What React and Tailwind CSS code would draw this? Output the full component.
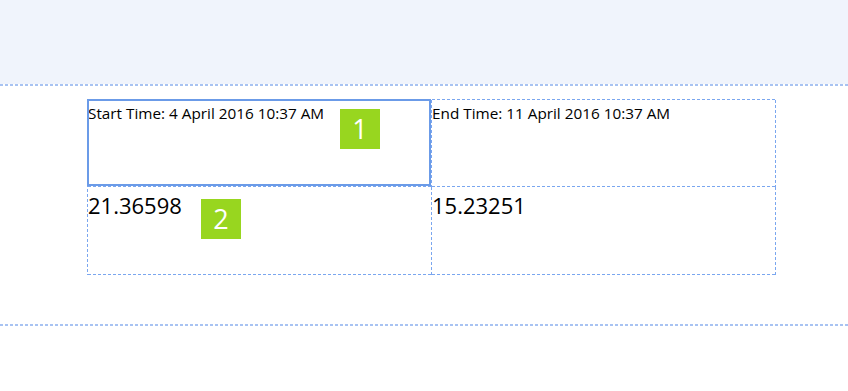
export default function App() {
  const dots = 'h-[2px] bg-[repeating-linear-gradient(to_right,#a8c3f2_0_3px,transparent_3px_5px)]'
  // dashed right + bottom edge for each table cell
  const cell =
    'bg-[repeating-linear-gradient(to_right,#7aa6ef_0_3px,transparent_3px_5px),repeating-linear-gradient(to_bottom,#7aa6ef_0_3px,transparent_3px_5px)] bg-[length:100%_1px,1px_100%] bg-[position:left_bottom,right_top] bg-no-repeat'

  return (
    <div className="w-[848px] h-[391px] bg-white overflow-hidden font-['Open_Sans',sans-serif] text-black">
      {/* header band */}
      <div className="h-[84px] bg-[#f0f4fc]" />
      <div className={dots} />

      <div className="pt-[13px] pl-[87px]">
        <div className="w-[689px] pt-px pl-px bg-[repeating-linear-gradient(to_right,#7aa6ef_0_3px,transparent_3px_5px),repeating-linear-gradient(to_bottom,#7aa6ef_0_3px,transparent_3px_5px)] bg-[length:100%_1px,1px_100%] bg-[position:left_top,left_top] bg-no-repeat">
          <div className="grid grid-cols-[344px_344px] grid-rows-[87px_88px]">
            {/* row 1 */}
            <div className={`relative ${cell} text-[15.3px] leading-5 pt-[3px]`}>
              Start Time: 4 April 2016 10:37 AM
              <div className="absolute -left-px -top-px w-[344px] h-[87px] border-2 border-[#6b9be8]" />
              <div className="absolute left-[252px] top-[9px] w-10 h-10 bg-[#98d61f] text-white text-[27px] leading-10 text-center">1</div>
            </div>
            <div className={`${cell} text-[15.3px] leading-5 pt-[3px]`}>
              End Time: 11 April 2016 10:37 AM
            </div>
            {/* row 2 */}
            <div className={`relative ${cell} text-[22px] leading-7 pt-[4px]`}>
              21.36598
              <div className="absolute left-[113px] top-[12px] w-10 h-10 bg-[#98d61f] text-white text-[27px] leading-10 text-center">2</div>
            </div>
            <div className={`${cell} text-[22px] leading-7 pt-[4px]`}>
              15.23251
            </div>
          </div>
        </div>
      </div>

      <div className="mt-[49px]">
        <div className={dots} />
      </div>
    </div>
  )
}
